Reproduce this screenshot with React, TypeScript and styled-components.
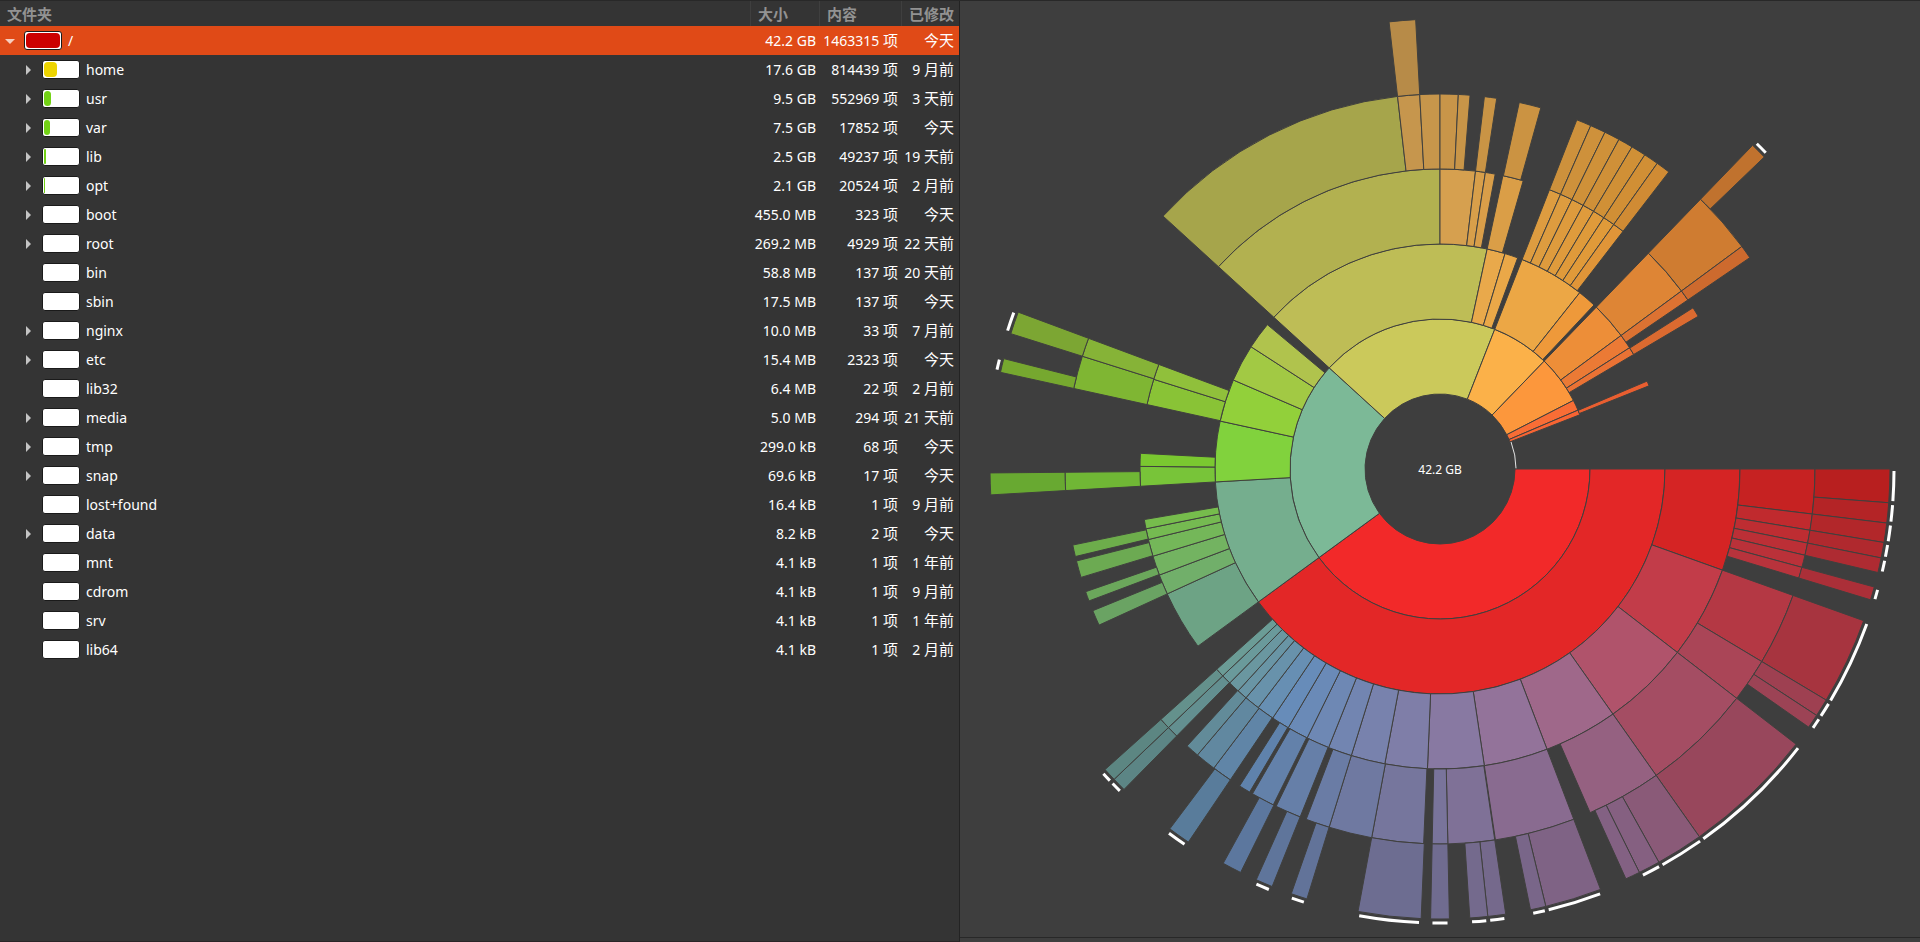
import React from 'react';
import styled, { createGlobalStyle } from 'styled-components';

const GlobalStyle = createGlobalStyle`
  * { box-sizing: border-box; }
  body {
    margin: 0;
    background: #3e3e3e;
    color: #fff;
    font-family: "Noto Sans", "Noto Sans CJK SC", sans-serif;
    font-size: 14px;
  }
`;

const Window = styled.main`
  display: grid;
  grid-template-columns: minmax(0, 1fr) minmax(0, 1fr);
  min-height: 100vh;
  border-top: 1px solid #282828;
`;

const TreePane = styled.section`
  background: #343434;
  border-right: 1px solid #232323;
  border-bottom: 1px solid #2a2527;
`;

const Tree = styled.table`
  width: 100%;
  table-layout: fixed;
  border-collapse: separate;
  border-spacing: 0;
`;

const Column = styled.col<{ $width?: number }>`
  width: ${(p) => (p.$width ? `${p.$width}px` : 'auto')};
`;

const Heading = styled.th`
  height: 25px;
  padding: 0 0 0 7px;
  border-right: 1px solid #3f3f3f;
  color: #929292;
  font-family: "Noto Sans CJK SC", sans-serif;
  font-size: 15px;
  font-weight: 700;
  line-height: 24px;
  text-align: left;
  white-space: nowrap;

  &:last-child { border-right: 0; }
`;

const Row = styled.tr<{ $selected: boolean }>`
  background: ${(p) => (p.$selected ? '#e04a17' : 'transparent')};
`;

const Cell = styled.td`
  height: 29px;
  padding: 0 4px 0 0;
  line-height: 28px;
  text-align: right;
  white-space: nowrap;

  &:last-child { padding-right: 5px; }
`;

const NameCell = styled(Cell)`
  text-align: left;
`;

const NameLine = styled.div<{ $depth: number }>`
  display: flex;
  align-items: center;
  gap: 6px;
  padding-left: ${(p) => 2 + p.$depth * 18}px;
`;

const Expander = styled.button`
  display: flex;
  align-items: center;
  justify-content: center;
  width: 16px;
  height: 16px;
  padding: 0;
  border: 0;
  background: none;
`;

const ExpanderSpace = styled.span`
  width: 16px;
`;

const UsageBar = styled.span`
  display: block;
  width: 38px;
  height: 19px;
  padding: 1px;
  border: 1px solid #1a1a1a;
  border-radius: 3px;
  background: #fff;
`;

const UsageFill = styled.span<{ $color: string }>`
  display: block;
  height: 15px;
  border-radius: 4px;
  background: ${(p) => p.$color};
`;

const Unit = styled.span`
  font-family: "Noto Sans CJK SC", sans-serif;
  font-size: 15px;
  line-height: 1;
`;

const ChartPane = styled.section`
  display: flex;
  flex-direction: column;
  padding-bottom: 4px;
`;

const ChartFrame = styled.div`
  display: flex;
  flex: 1;
  border-bottom: 1px solid #282828;
`;

const Chart = styled.svg`
  display: block;
  width: 100%;
  flex: 1;
`;

const Total = styled.text`
  fill: #fff;
  font-size: 12px;
  text-anchor: middle;
`;

type Folder = {
  name: string;
  size: string;
  count: number;
  age?: [number, string];
  leaf?: boolean;
  share?: number;
};

const folders: Folder[] = [
  { name: '/', size: '42.2 GB', count: 1463315, share: 100 },
  { name: 'home', size: '17.6 GB', count: 814439, age: [9, '月前'], share: 39 },
  { name: 'usr', size: '9.5 GB', count: 552969, age: [3, '天前'], share: 21 },
  { name: 'var', size: '7.5 GB', count: 17852, share: 18 },
  { name: 'lib', size: '2.5 GB', count: 49237, age: [19, '天前'], share: 6 },
  { name: 'opt', size: '2.1 GB', count: 20524, age: [2, '月前'], share: 3 },
  { name: 'boot', size: '455.0 MB', count: 323 },
  { name: 'root', size: '269.2 MB', count: 4929, age: [22, '天前'] },
  { name: 'bin', size: '58.8 MB', count: 137, age: [20, '天前'], leaf: true },
  { name: 'sbin', size: '17.5 MB', count: 137, leaf: true },
  { name: 'nginx', size: '10.0 MB', count: 33, age: [7, '月前'] },
  { name: 'etc', size: '15.4 MB', count: 2323 },
  { name: 'lib32', size: '6.4 MB', count: 22, age: [2, '月前'], leaf: true },
  { name: 'media', size: '5.0 MB', count: 294, age: [21, '天前'] },
  { name: 'tmp', size: '299.0 kB', count: 68 },
  { name: 'snap', size: '69.6 kB', count: 17 },
  { name: 'lost+found', size: '16.4 kB', count: 1, age: [9, '月前'], leaf: true },
  { name: 'data', size: '8.2 kB', count: 2 },
  { name: 'mnt', size: '4.1 kB', count: 1, age: [1, '年前'], leaf: true },
  { name: 'cdrom', size: '4.1 kB', count: 1, age: [9, '月前'], leaf: true },
  { name: 'srv', size: '4.1 kB', count: 1, age: [1, '年前'], leaf: true },
  { name: 'lib64', size: '4.1 kB', count: 1, age: [2, '月前'], leaf: true },
];

const fillColor = (share: number) => (share > 66 ? '#cc0000' : share > 33 ? '#edd400' : '#73d216');

// Each ring is a list of runs; a run lists the angles (degrees, clockwise from
// three o'clock) that bound its neighbouring folders.
const rings: number[][][] = [
  [[0, 143.8, 222.4, 291.4, 314, 332.8, 336.9, 338.8]],
  [
    [0, 143.8, 176.7, 192.3, 203.3, 212.9, 219.9],
    [222.4, 282.1, 286.8, 290.2],
    [291.4, 308.4, 313.2],
    [314, 323.6, 327.4, 329.4],
    [337, 338.3],
  ],
  [
    [0, 19.7, 37.7, 54.8, 69.1, 81.5, 92.4, 100.6, 107.2, 111.8, 116.3, 120.4, 123.9, 127.3, 130.3, 132.3, 134.5, 136.4, 138.1],
    [143.8, 155.4, 159.3, 163.1, 166.4, 168.5, 170.3],
    [176.7, 180.5, 183],
    [192.4, 197.4, 200.4],
    [222.4, 270, 276.8, 278.7, 280.6],
    [282.1, 286.1],
    [291.4, 293.7, 296.1, 298.5, 300.8, 303.1, 305.4, 307.6],
    [314, 323.6, 325.7],
    [327.5, 329.4],
  ],
  [
    [0, 6.9, 9.4, 11.4, 13.3, 15.2, 16.9],
    [19.7, 30.9, 37.7, 54.8, 66.4],
    [69.1, 81.5],
    [81.6, 88.8, 91.2],
    [92.5, 100.5, 107.2, 110.9],
    [111.9, 115.9],
    [116.4, 120],
    [120.5, 122.3],
    [124, 127.1, 130.3, 132.4],
    [134.6, 136.4, 138.1],
    [155.4, 157.8],
    [159.4, 160.9],
    [163.2, 165.8],
    [166.5, 168.3],
    [176.7, 179.5],
    [192.4, 197.5, 200.4],
    [222.4, 263.5, 266.9, 270, 272.8, 274.6],
    [276.8, 278.7],
    [282.2, 285.6],
    [291.4, 293.7, 296.1, 298.5, 300.8, 303.1, 305.4, 307.6],
    [314, 323.6, 325.7],
  ],
  [
    [0, 4.3, 6.9, 9.4, 11.4, 13.3],
    [15.2, 16.9],
    [19.7, 30.9, 33.2, 35],
    [37.7, 54.8, 60.9, 63.7],
    [63.7, 65.6],
    [69.1, 76.4, 78.4],
    [81.6, 83.9, 86.2],
    [88.8, 91.2],
    [92.4, 100.5],
    [107.2, 109.3],
    [111.9, 114.1],
    [116.3, 118.8],
    [124, 126.9],
    [134.6, 136.4, 138.1],
    [176.7, 179.5],
    [192.4, 194.2],
    [197.5, 200.4],
    [263.5, 266.9],
    [314, 316.1],
  ],
];

const withoutHiddenChildren = [63.7, 116.3, 176.7, 263.5];

const palette = [
  [0.94, 0.16, 0.16],
  [0.68, 0.49, 0.66],
  [0.45, 0.62, 0.82],
  [0.54, 0.89, 0.2],
  [0.91, 0.73, 0.43],
  [0.99, 0.68, 0.25],
];

const sliceColor = (angle: number, depth: number) => {
  const position = ((angle / 180) * 99) / (100 / 3);
  const index = Math.floor(position);
  const from = palette[index];
  const to = palette[(index + 1) % palette.length];
  const intensity = 1 - depth * 0.06;
  const peak = 242 / 240;
  const channels = from.map((c, i) =>
    Math.round(255 * peak * intensity * (c + (to[i] - c) * (position - index))),
  );
  return `rgb(${channels.join(',')})`;
};

const THICKNESS = 75;

const polar = (radius: number, degrees: number) => {
  const t = (degrees * Math.PI) / 180;
  return `${(radius * Math.cos(t)).toFixed(2)} ${(radius * Math.sin(t)).toFixed(2)}`;
};

const arcPath = (r: number, a: number, b: number) =>
  `M${polar(r, a)} A${r} ${r} 0 0 1 ${polar(r, b)}`;

const slicePath = (inner: number, a: number, b: number) => {
  const outer = inner + THICKNESS;
  return `${arcPath(outer, a, b)} L${polar(inner, b)} A${inner} ${inner} 0 0 0 ${polar(inner, a)} Z`;
};

function RingsChart() {
  return (
    <Chart viewBox="-480 -468 960 936" role="img" aria-label="42.2 GB">
      {rings.map((runs, depth) =>
        runs.map((run) =>
          run.slice(0, -1).map((start, i) => {
            const end = run[i + 1];
            const marked = depth === 4 && !withoutHiddenChildren.includes(start);
            return (
              <g key={start}>
                <path
                  d={slicePath(THICKNESS * (depth + 1), start, end)}
                  fill={sliceColor(start, depth)}
                  stroke="#40403e"
                />
                {marked && (
                  <path d={arcPath(454, start + 0.25, end - 0.25)} fill="none" stroke="#fff" strokeWidth="3" />
                )}
              </g>
            );
          }),
        ),
      )}
      <path d={arcPath(76, 339.2, 359.5)} fill="none" stroke="#e4e4e4" />
      <Total x="0" y="5">42.2 GB</Total>
    </Chart>
  );
}

function FolderRow({ folder, depth }: { folder: Folder; depth: number }) {
  const root = depth === 0;
  return (
    <Row $selected={root}>
      <NameCell>
        <NameLine $depth={depth}>
          {folder.leaf ? (
            <ExpanderSpace />
          ) : (
            <Expander type="button" aria-expanded={root} aria-label={folder.name}>
              <svg width="10" height="10" viewBox="0 0 10 10">
                {root ? <path d="M0 3h10L5 8z" fill="#f6cdbe" /> : <path d="M3 0v10l5-5z" fill="#c4c4c4" />}
              </svg>
            </Expander>
          )}
          <UsageBar>
            {folder.share && (
              <UsageFill $color={fillColor(folder.share)} style={{ width: `${folder.share}%` }} />
            )}
          </UsageBar>
          <span>{folder.name}</span>
        </NameLine>
      </NameCell>
      <Cell>{folder.size}</Cell>
      <Cell>
        {folder.count} <Unit>项</Unit>
      </Cell>
      <Cell>
        {folder.age ? (
          <>
            {folder.age[0]} <Unit>{folder.age[1]}</Unit>
          </>
        ) : (
          <Unit>今天</Unit>
        )}
      </Cell>
    </Row>
  );
}

export default function App() {
  return (
    <>
      <GlobalStyle />
      <Window>
        <TreePane>
          <Tree>
            <colgroup>
              <Column />
              <Column $width={69} />
              <Column $width={82} />
              <Column $width={57} />
            </colgroup>
            <thead>
              <tr>
                <Heading scope="col">文件夹</Heading>
                <Heading scope="col">大小</Heading>
                <Heading scope="col">内容</Heading>
                <Heading scope="col">已修改</Heading>
              </tr>
            </thead>
            <tbody>
              {folders.map((folder, i) => (
                <FolderRow key={folder.name} folder={folder} depth={i === 0 ? 0 : 1} />
              ))}
            </tbody>
          </Tree>
        </TreePane>
        <ChartPane>
          <ChartFrame>
            <RingsChart />
          </ChartFrame>
        </ChartPane>
      </Window>
    </>
  );
}
